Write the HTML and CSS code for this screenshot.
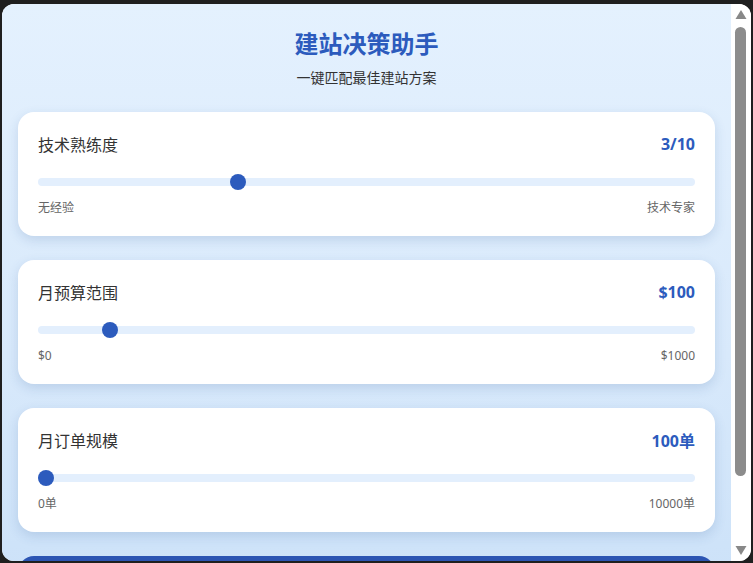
FILE: index.html
```html
<!DOCTYPE html>
<html lang="zh-CN">
	<head>
		<meta charset="utf-8" />
		<link rel="stylesheet" href="styles.css">
	</head>
	<body>
		<div class="frame flex">
			<div class="viewport">
				<div class="page">
					<header class="header center">
						<h1 class="title">建站决策助手</h1>
						<p class="subtitle">一键匹配最佳建站方案</p>
					</header>

					<section class="card">
						<div class="card-head flex">
							<span class="label">技术熟练度</span>
							<b class="value">3/10</b>
						</div>
						<input type="range" class="slider" min="0" max="10" value="3">
						<div class="range-ends flex">
							<span>无经验</span>
							<span>技术专家</span>
						</div>
					</section>

					<section class="card">
						<div class="card-head flex">
							<span class="label">月预算范围</span>
							<b class="value">$100</b>
						</div>
						<input type="range" class="slider" min="0" max="1000" value="100">
						<div class="range-ends flex">
							<span>$0</span>
							<span>$1000</span>
						</div>
					</section>

					<section class="card">
						<div class="card-head flex">
							<span class="label">月订单规模</span>
							<b class="value">100单</b>
						</div>
						<input type="range" class="slider" min="100" max="10000" value="100">
						<div class="range-ends flex">
							<span>0单</span>
							<span>10000单</span>
						</div>
					</section>

					<section class="result"></section>
				</div>
			</div>
			<div class="scrollbar flex">
				<svg class="arrow" viewBox="0 0 20 20">
					<path d="M10 6 L15.5 15 L4.5 15 Z"/>
				</svg>
				<div class="track">
					<div class="thumb"></div>
				</div>
				<svg class="arrow" viewBox="0 0 20 20">
					<path d="M4.5 5 L15.5 5 L10 14 Z"/>
				</svg>
			</div>
		</div>
	</body>
</html>
```
FILE: styles.css
```css
html, body {
	margin: 0;
	padding: 0;
	background-color: #1f1f1f;
	height: 100%;
}

body {
	font-family: "Noto Sans", "Noto Sans CJK SC", sans-serif;
	color: #333;
	overflow: hidden;
}

.flex {
	display: flex;
}

.center {
	text-align: center;
}

.frame {
	margin: 4px 2px 2px 2px;
	height: 557px;
	border-radius: 12px;
	overflow: hidden;
	background-color: #fff;
}

.viewport {
	flex: 1;
	overflow: hidden;
}

.scrollbar {
	width: 20px;
	flex-direction: column;
	background-color: #fff;
}

.arrow {
	width: 20px;
	height: 20px;
	fill: #888;
	flex-shrink: 0;
}

.track {
	flex: 1;
	padding: 3px 5px 0 4px;
}

.thumb {
	height: 449px;
	border-radius: 6px;
	background-color: #8c8c8c;
}

.page {
	padding: 16px;
	background: linear-gradient(180deg, #e4f1fe 0%, #d8e9fb 55%, #c9e0f8 100%);
}

.header {
	padding-top: 8px;
	margin-bottom: 24px;
}

.title {
	margin: 0;
	font-size: 24px;
	line-height: 32px;
	font-weight: 700;
	color: #2c5bbd;
}

.subtitle {
	margin: 8px 0 0 0;
	font-size: 14px;
	line-height: 20px;
	color: #333;
}

.card {
	background-color: #fff;
	border-radius: 16px;
	padding: 20px 20px 19px 20px;
	margin-bottom: 24px;
	box-shadow: 0 4px 12px rgba(40, 80, 140, 0.16);
}

.card-head {
	justify-content: space-between;
	align-items: center;
	height: 24px;
}

.label {
	font-size: 16px;
	color: #333;
}

.value {
	font-size: 16px;
	font-weight: 700;
	color: #2c5bbd;
}

.slider {
	-webkit-appearance: none;
	appearance: none;
	display: block;
	width: 100%;
	height: 16px;
	margin: 18px 0 0 0;
	background: transparent;
}

.slider::-webkit-slider-runnable-track {
	height: 8px;
	border-radius: 4px;
	background-color: #e3effd;
}

.slider::-webkit-slider-thumb {
	-webkit-appearance: none;
	appearance: none;
	width: 16px;
	height: 16px;
	margin-top: -4px;
	border-radius: 50%;
	background-color: #2c5bbd;
	border: none;
}

.range-ends {
	justify-content: space-between;
	margin-top: 9px;
	font-size: 12px;
	line-height: 18px;
	color: #666;
}

.result {
	background-color: #2c55b3;
	border-radius: 16px;
	height: 68px;
}
```
